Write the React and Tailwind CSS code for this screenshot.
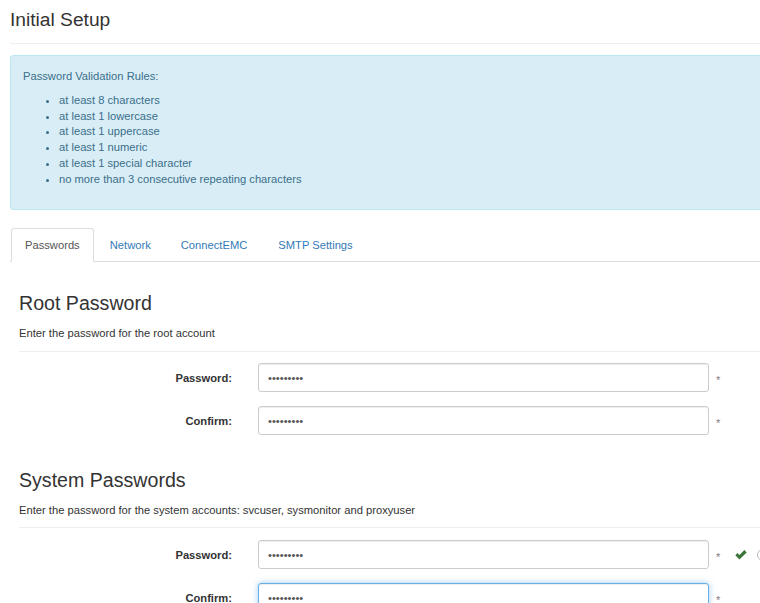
import React from "react";

function Row({ label, mt, focused, check }) {
  return (
    <div className={`flex items-center ${mt}`}>
      <label className="w-[213px] text-right font-bold text-[#333]">{label}</label>
      <input
        type="password"
        readOnly
        defaultValue="abcdefghi"
        className={
          focused
            ? "ml-[26px] w-[451px] h-[29px] px-[9px] rounded-[3px] border border-[#66afe9] bg-white text-[11.2px] text-[#555] outline-none shadow-[inset_0_1px_1px_rgba(0,0,0,0.075),0_0_6px_rgba(102,175,233,0.6)]"
            : "ml-[26px] w-[451px] h-[29px] px-[9px] rounded-[3px] border border-[#ccc] bg-white text-[11.2px] text-[#555] outline-none shadow-[inset_0_1px_1px_rgba(0,0,0,0.075)]"
        }
      />
      <span className="ml-[7px] pt-[5px] text-[11.2px] text-[#8a7f7f]">*</span>
      {check && (
        <>
          <svg className="ml-[15px]" width="12" height="10" viewBox="0 0 12 10">
            <path d="M0.3 5.2 L2.4 3.1 L4.4 5.1 L9.4 0.1 L11.7 2.4 L4.4 9.6 Z" fill="#3c763d" />
          </svg>
          <span className="ml-[10px] w-[12px] h-[12px] rounded-full border-[1.5px] border-[#bbb] shrink-0" />
        </>
      )}
    </div>
  );
}

function Section({ title, desc, mt, hrMt, rowMt, focusedLast, check }) {
  return (
    <div>
      <h3 className={`${mt} text-[19.6px] leading-[22px] text-[#333]`}>{title}</h3>
      <p className="mt-[11px] text-[11.2px] leading-[16px] text-[#333]">{desc}</p>
      <div className={`${hrMt} border-t border-[#eee]`} />
      <Row label="Password:" mt={rowMt} check={check} />
      <Row label="Confirm:" mt="mt-[14px]" focused={focusedLast} />
    </div>
  );
}

export default function App() {
  return (
    <div className="w-[760px] h-[603px] overflow-hidden bg-white font-['Liberation_Sans',Arial,sans-serif] text-[11.2px] leading-[16px] text-[#333]">
      <div className="w-[840px] pl-[10px] pt-[8px]">
        <h1 className="text-[19.2px] leading-[24px] text-[#333]">Initial Setup</h1>
        <div className="mt-[11px] border-t border-[#eee]" />
        <div className="mt-[11px] rounded-[3px] border border-[#bce8f1] bg-[#d9edf7] text-[#3a6f8a] pt-[12px] pb-[22px] px-[12px]">
          <p className="leading-[16px] mb-[9px]">Password Validation Rules:</p>
          <ul className="list-disc pl-[36px] leading-[15.7px]">
            <li>at least 8 characters</li>
            <li>at least 1 lowercase</li>
            <li>at least 1 uppercase</li>
            <li>at least 1 numeric</li>
            <li>at least 1 special character</li>
            <li>no more than 3 consecutive repeating characters</li>
          </ul>
        </div>
        <div className="mt-[18px] flex border-b border-[#ddd]">
          <div className="ml-px -mb-px border border-[#ddd] border-b-white rounded-t-[3px] bg-white px-[13px] py-[8px] leading-[16px] text-[#555]">
            Passwords
          </div>
          <div className="ml-[2px] -mb-px border border-transparent px-[13px] py-[8px] leading-[16px] text-[#337ab7]">
            Network
          </div>
          <div className="ml-[2px] -mb-px border border-transparent px-[13px] py-[8px] leading-[16px] text-[#337ab7]">
            ConnectEMC
          </div>
          <div className="ml-[3px] -mb-px border border-transparent px-[13px] py-[8px] leading-[16px] text-[#337ab7]">
            SMTP Settings
          </div>
        </div>
        <div className="pl-[9px]">
          <Section
            title="Root Password"
            desc="Enter the password for the root account"
            mt="mt-[30px]"
            hrMt="mt-[10px]"
            rowMt="mt-[11px]"
          />
          <Section
            title="System Passwords"
            desc="Enter the password for the system accounts: svcuser, sysmonitor and proxyuser"
            mt="mt-[34px]"
            hrMt="mt-[9px]"
            rowMt="mt-[12px]"
            focusedLast
            check
          />
        </div>
      </div>
    </div>
  );
}
